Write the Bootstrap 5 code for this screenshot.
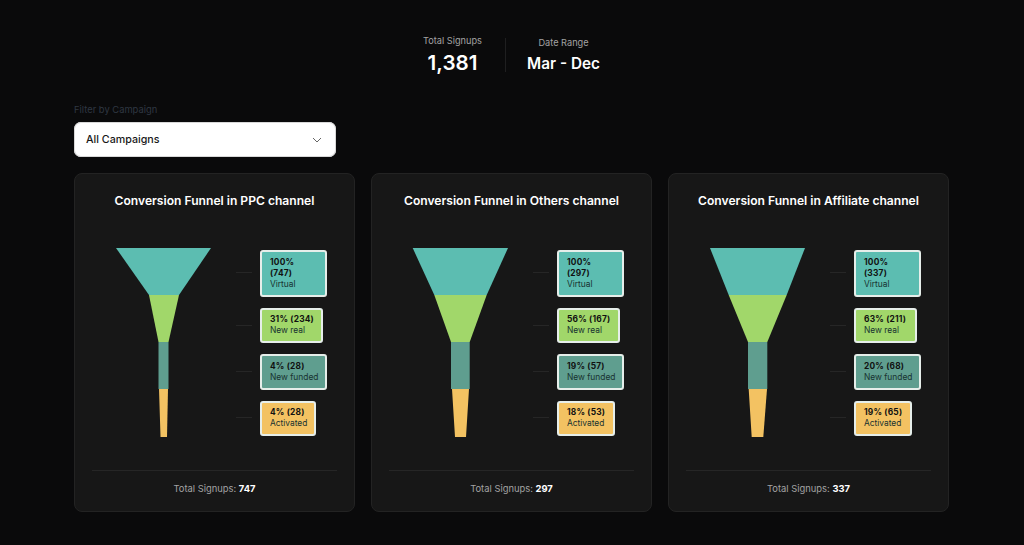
<!DOCTYPE html>
<html lang="en">
<head>
<meta charset="utf-8">
<title>Conversion Funnels</title>
<link href="https://cdn.jsdelivr.net/npm/bootstrap@5.3.0/dist/css/bootstrap.min.css" rel="stylesheet">
<style>
html,body{height:545px;overflow:hidden}
body{background:#0a0a0b;font-family:Inter,"Liberation Sans",sans-serif;color:#fff}
.page-wrap{width:875px;margin-left:74px}
.kpi-row{padding-top:35px;height:104px;padding-left:349px}
.kpi-item{text-align:center}
.kpi-first{width:59px}
.kpi-rule{width:1px;height:34px;background:#1f1f20;margin:3px 21px 0 23px}
.kpi-second{width:73px;padding-top:2px}
.kpi-cap{font-size:9.2px;line-height:12px;color:#a3a3a3;white-space:nowrap}
.kpi-val{font-weight:600;line-height:26px;margin-top:2px;white-space:nowrap}
.kpi-big{font-size:20.6px;margin-top:3px}
.kpi-mid{font-size:15.3px;line-height:22px;margin-top:4px}
.filter-cap{font-size:9.4px;line-height:12px;color:#2f3742;margin-bottom:6px}
.select-box{width:262px;height:35px;background:#fff;border-radius:7px;padding:1px 14px 0 12px;color:#171717;font-size:10.7px;font-weight:500;margin-bottom:16px;border:0;box-shadow:0 0 0 1px #d8d8d8 inset}
.funnel-grid{gap:16px}
.funnel-card{width:281px;height:339px;background:#171717;border:1px solid #232323;border-radius:8px;padding:0 17px;color:#fff}
.funnel-title{font-size:12.1px;line-height:16px;font-weight:600;text-align:center;margin:18.5px 0 0;white-space:nowrap}
.funnel-area{margin-top:39.5px;height:190px}
.funnel-svg{width:168px;height:190px;flex:none}
.tag-col{padding-top:2px;gap:11px;align-items:flex-start}
.tag-box{border:2px solid #e6eeea;border-radius:3px;padding:4.75px 6px 4.75px 8px;font-size:8.4px;line-height:11px;color:#173230}
.tag-box b{display:block;font-weight:700;color:#111;letter-spacing:.2px}
.tag-w1{width:67px}.tag-w2{width:63px}.tag-w3{width:67px}.tag-w4{width:56px}
.tag-w2b{width:63px}.tag-w4b{width:58px}.tag-w4c{width:58px}
.tone-a{background:#5cbdb1}.tone-b{background:#a1d76a}.tone-c{background:#5f9e8f}.tone-d{background:#f3c262}
.funnel-foot{border-top:1px solid #262626;margin-top:32px;padding-top:12px;font-size:9.4px;line-height:12px;text-align:center;color:#a3a3a3}
.funnel-foot b{color:#fff;font-weight:700}
.link-line{stroke:#262626;stroke-width:1}
</style>
</head>
<body>
<div class="page-wrap">
  <div class="kpi-row d-flex align-items-start">
    <div class="kpi-item kpi-first"><div class="kpi-cap">Total Signups</div><div class="kpi-val kpi-big">1,381</div></div>
    <div class="kpi-rule"></div>
    <div class="kpi-item kpi-second"><div class="kpi-cap">Date Range</div><div class="kpi-val kpi-mid">Mar - Dec</div></div>
  </div>
  <div class="filter-cap">Filter by Campaign</div>
  <div class="select-box d-flex align-items-center justify-content-between">
    <span>All Campaigns</span>
    <svg width="10" height="6" viewBox="0 0 10 6" fill="none" stroke="#666" stroke-width="1"><path d="M1 1l4 4 4-4"/></svg>
  </div>
  <div class="funnel-grid d-flex">
    <div class="funnel-card">
      <div class="funnel-title">Conversion Funnel in PPC channel</div>
      <div class="funnel-area d-flex">
        <svg class="funnel-svg" viewBox="0 0 168 190">
          <polygon fill="#5cbdb1" points="24,0 119,0 87,47 57,47"/>
          <polygon fill="#a1d76a" points="57,47 87,47 76.5,94 66.5,94"/>
          <rect fill="#5f9e8f" x="66.5" y="94" width="10" height="47"/>
          <polygon fill="#f3c262" points="67,141 76,141 75,189 68.5,189"/>
          <path class="link-line" d="M144 24.5h16M144 77.5h16M144 123.5h16M144 169.5h16"/>
        </svg>
        <div class="tag-col d-flex flex-column">
          <div class="tag-box tag-w1 tone-a"><b>100%<br>(747)</b>Virtual</div>
          <div class="tag-box tag-w2 tone-b"><b>31% (234)</b>New real</div>
          <div class="tag-box tag-w3 tone-c"><b>4% (28)</b>New funded</div>
          <div class="tag-box tag-w4 tone-d"><b>4% (28)</b>Activated</div>
        </div>
      </div>
      <div class="funnel-foot">Total Signups: <b>747</b></div>
    </div>
    <div class="funnel-card">
      <div class="funnel-title">Conversion Funnel in Others channel</div>
      <div class="funnel-area d-flex">
        <svg class="funnel-svg" viewBox="0 0 168 190">
          <polygon fill="#5cbdb1" points="23.7,0 119,0 97.7,47 45.3,47"/>
          <polygon fill="#a1d76a" points="45.3,47 97.7,47 80.7,94 62,94"/>
          <rect fill="#5f9e8f" x="62" y="94" width="18.7" height="47"/>
          <polygon fill="#f3c262" points="63,141 80,141 77,189 66,189"/>
          <path class="link-line" d="M144 24.5h16M144 77.5h16M144 123.5h16M144 169.5h16"/>
        </svg>
        <div class="tag-col d-flex flex-column">
          <div class="tag-box tag-w1 tone-a"><b>100%<br>(297)</b>Virtual</div>
          <div class="tag-box tag-w2b tone-b"><b>56% (167)</b>New real</div>
          <div class="tag-box tag-w3 tone-c"><b>19% (57)</b>New funded</div>
          <div class="tag-box tag-w4b tone-d"><b>18% (53)</b>Activated</div>
        </div>
      </div>
      <div class="funnel-foot">Total Signups: <b>297</b></div>
    </div>
    <div class="funnel-card">
      <div class="funnel-title">Conversion Funnel in Affiliate channel</div>
      <div class="funnel-area d-flex">
        <svg class="funnel-svg" viewBox="0 0 168 190">
          <polygon fill="#5cbdb1" points="24,0 119,0 100.7,47 42.7,47"/>
          <polygon fill="#a1d76a" points="42.7,47 100.7,47 81.3,94 62,94"/>
          <rect fill="#5f9e8f" x="62" y="94" width="19.3" height="47"/>
          <polygon fill="#f3c262" points="62.7,141 81,141 77.3,189 65.7,189"/>
          <path class="link-line" d="M144 24.5h16M144 77.5h16M144 123.5h16M144 169.5h16"/>
        </svg>
        <div class="tag-col d-flex flex-column">
          <div class="tag-box tag-w1 tone-a"><b>100%<br>(337)</b>Virtual</div>
          <div class="tag-box tag-w2b tone-b"><b>63% (211)</b>New real</div>
          <div class="tag-box tag-w3 tone-c"><b>20% (68)</b>New funded</div>
          <div class="tag-box tag-w4c tone-d"><b>19% (65)</b>Activated</div>
        </div>
      </div>
      <div class="funnel-foot">Total Signups: <b>337</b></div>
    </div>
  </div>
</div>
<script src="https://cdn.jsdelivr.net/npm/bootstrap@5.3.0/dist/js/bootstrap.bundle.min.js"></script>
</body>
</html>
